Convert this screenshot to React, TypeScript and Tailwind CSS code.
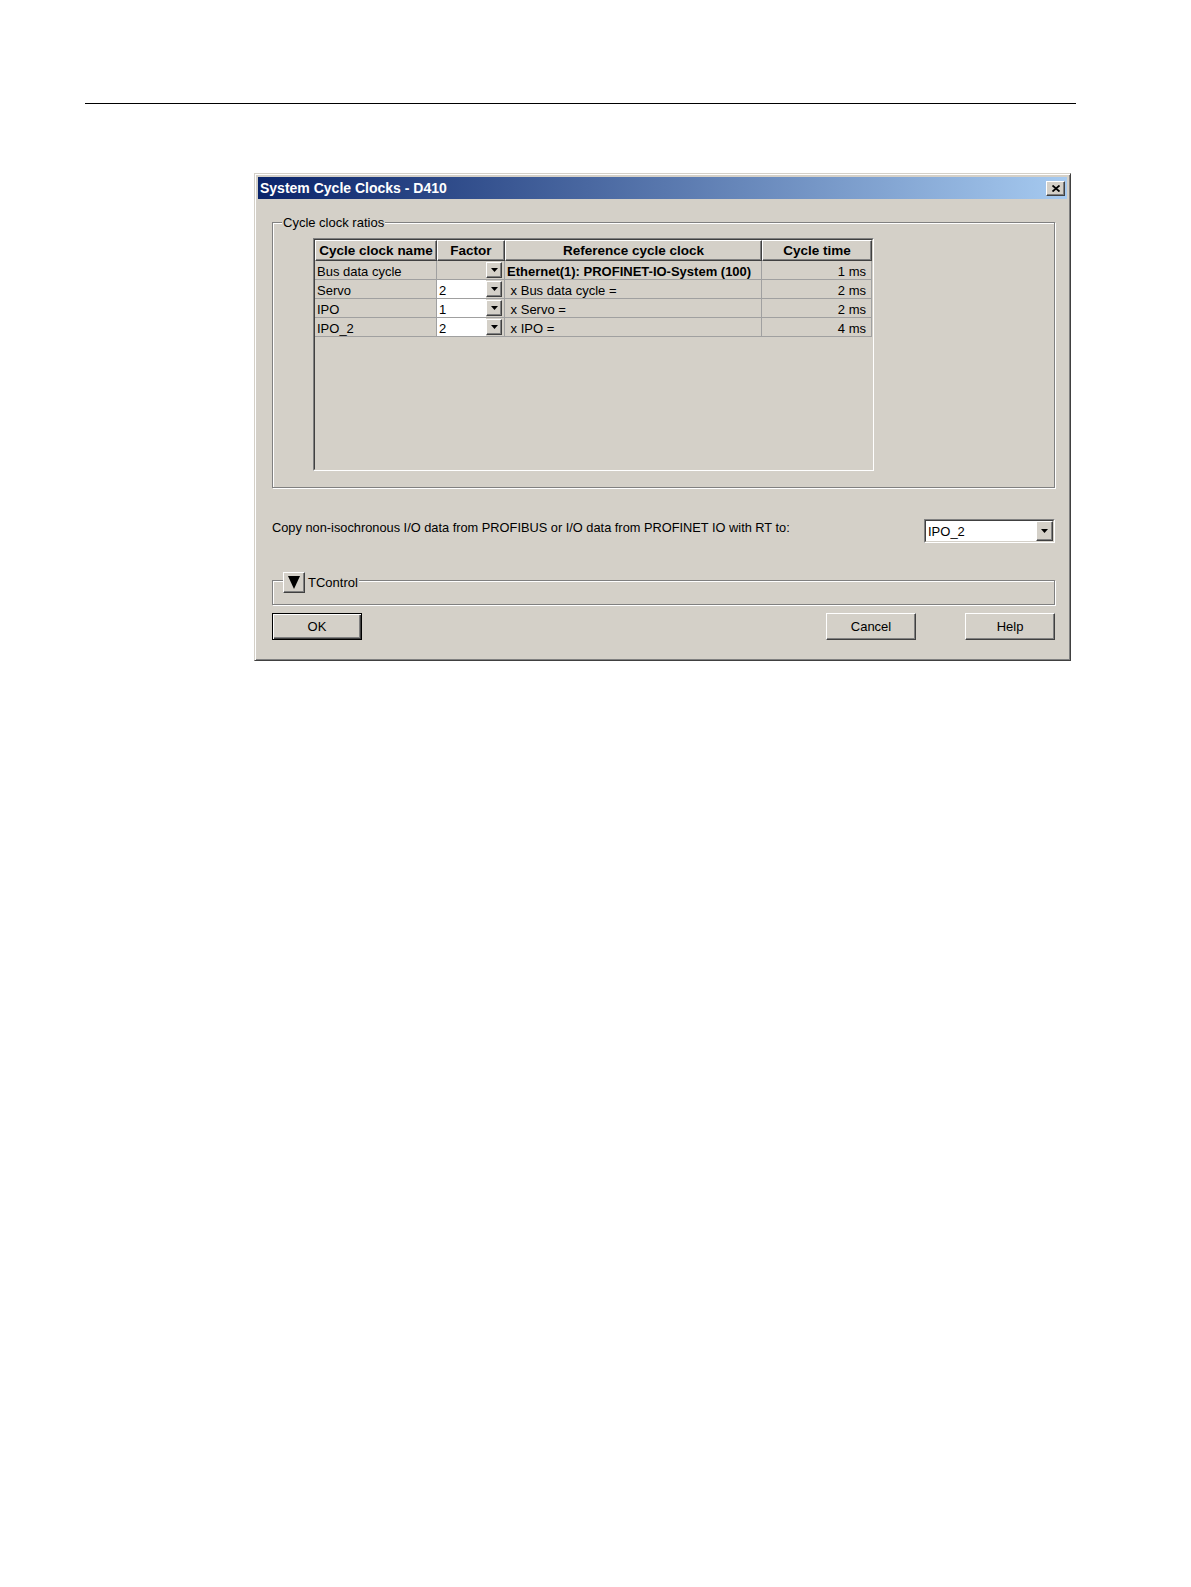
import React from 'react';

interface ClockRow {
  name: string;
  factor: string;
  reference: string;
  time: string;
  bold?: boolean;
  editable: boolean;
}

const rows: ClockRow[] = [
  { name: 'Bus data cycle', factor: '', reference: 'Ethernet(1): PROFINET-IO-System (100)', time: '1 ms', bold: true, editable: false },
  { name: 'Servo', factor: '2', reference: '\u00a0x Bus data cycle =', time: '2 ms', editable: true },
  { name: 'IPO', factor: '1', reference: '\u00a0x Servo =', time: '2 ms', editable: true },
  { name: 'IPO_2', factor: '2', reference: '\u00a0x IPO =', time: '4 ms', editable: true },
];

const raised =
  'border border-t-white border-l-white border-r-[#404040] border-b-[#404040] shadow-[inset_-1px_-1px_0_#808080] bg-[#d4d0c8]';

function DownTriangle() {
  return (
    <svg width="7" height="4" viewBox="0 0 7 4" className="block">
      <path d="M0 0H7L3.5 4Z" fill="#000" />
    </svg>
  );
}

function ArrowButton({ className }: { className: string }) {
  return (
    <div className={`flex shrink-0 items-center justify-center ${raised} ${className}`}>
      <DownTriangle />
    </div>
  );
}

function PushButton({ label, isDefault }: { label: string; isDefault?: boolean }) {
  const frame = isDefault
    ? 'border border-black shadow-[inset_1px_1px_0_#fff,inset_-1px_-1px_0_#404040,inset_-2px_-2px_0_#808080]'
    : raised;
  return (
    <div className={`flex h-[27px] w-[90px] items-center justify-center bg-[#d4d0c8] text-[13px] ${frame}`}>
      {label}
    </div>
  );
}

function HeaderCell({ width, children }: { width: string; children: React.ReactNode }) {
  return (
    <div
      className={`flex h-full items-center justify-center pt-px text-[13.5px] font-bold ${raised} ${width}`}
    >
      {children}
    </div>
  );
}

export default function App() {
  return (
    <div className="min-h-[1587px] bg-white pt-[103px] font-['Liberation_Sans',Arial,sans-serif] text-[13px] text-black">
      <div className="ml-[85px] h-px w-[991px] bg-black" />

      <div className="ml-[254px] mt-[69px] h-[488px] w-[817px] border border-t-[#d4d0c8] border-l-[#d4d0c8] border-r-[#404040] border-b-[#404040] bg-[#d4d0c8] p-[3px] shadow-[inset_1px_1px_0_#fff,inset_-1px_-1px_0_#808080]">
        {/* title bar */}
        <div className="flex h-[22px] items-center justify-between bg-[linear-gradient(to_right,#0a246a,#a6caf0)] pl-[2px] pr-[2px]">
          <span className="text-[14px] font-bold leading-none text-white">System Cycle Clocks - D410</span>
          <div className={`flex h-[15px] w-[19px] items-center justify-center ${raised}`}>
            <svg width="8" height="7" viewBox="0 0 8 7" className="block">
              <path d="M0.5 0.5L7.5 6.5M7.5 0.5L0.5 6.5" stroke="#000" strokeWidth="1.8" />
            </svg>
          </div>
        </div>

        <div className="pl-[14px] pr-[12px]">
          {/* Cycle clock ratios */}
          <div className="mt-[23px] h-[266px] border border-[#808080] shadow-[inset_1px_1px_0_#fff,1px_1px_0_#fff]">
            <div className="-mt-[8px] ml-[9px] w-fit bg-[#d4d0c8] px-[1px] leading-[15px]">Cycle clock ratios</div>

            <div className="ml-[40px] mt-[8px] h-[233px] w-[561px] border border-t-[#808080] border-l-[#808080] border-r-white border-b-white">
              <div className="h-full border border-t-[#404040] border-l-[#404040] border-r-[#d4d0c8] border-b-[#d4d0c8]">
                <div className="flex h-[21px]">
                  <HeaderCell width="w-[122px]">Cycle clock name</HeaderCell>
                  <HeaderCell width="w-[68px]">Factor</HeaderCell>
                  <HeaderCell width="w-[257px]">Reference cycle clock</HeaderCell>
                  <HeaderCell width="w-[110px]">Cycle time</HeaderCell>
                </div>
                {rows.map((row) => (
                  <div key={row.name} className="flex h-[19px] leading-[19px]">
                    <div className="w-[122px] truncate border-r border-b border-[#a0a0a0] pl-[2px] pt-px">{row.name}</div>
                    <div className="flex w-[68px] items-center border-r border-b border-[#a0a0a0]">
                      <div className={`h-full flex-1 pl-[2px] pt-px ${row.editable ? 'bg-white' : ''}`}>{row.factor}</div>
                      <ArrowButton className="mr-[2px] h-[16px] w-[16px]" />
                    </div>
                    <div
                      className={`w-[257px] whitespace-nowrap border-r border-b border-[#a0a0a0] pl-[2px] pt-px ${row.bold ? 'font-bold' : ''}`}
                    >
                      {row.reference}
                    </div>
                    <div className="w-[110px] border-r border-b border-[#a0a0a0] pr-[5px] pt-px text-right">{row.time}</div>
                  </div>
                ))}
              </div>
            </div>
          </div>

          {/* copy target */}
          <div className="mt-[31px] flex h-[24px] items-start justify-between">
            <span className="mt-[1px] text-[12.8px] leading-[15px]">
              Copy non-isochronous I/O data from PROFIBUS or I/O data from PROFINET IO with RT to:
            </span>
            <div className="h-[24px] w-[131px] border border-t-[#808080] border-l-[#808080] border-r-white border-b-white">
              <div className="flex h-full items-center border border-t-[#404040] border-l-[#404040] border-r-[#d4d0c8] border-b-[#d4d0c8] bg-white">
                <span className="flex-1 pl-[2px] leading-[15px]">IPO_2</span>
                <ArrowButton className="h-[20px] w-[17px]" />
              </div>
            </div>
          </div>

          {/* TControl */}
          <div className="mt-[37px] h-[25px] border border-[#808080] shadow-[inset_1px_1px_0_#fff,1px_1px_0_#fff]">
            <div className="-mt-[9px] ml-[10px] flex w-fit items-center bg-[#d4d0c8] pr-[1px]">
              <div className={`flex h-[21px] w-[22px] items-center justify-center ${raised}`}>
                <svg width="12" height="13" viewBox="0 0 12 13" className="block">
                  <path d="M0 0H12L6 13Z" fill="#000" />
                </svg>
              </div>
              <span className="ml-[3px] leading-[15px]">TControl</span>
            </div>
          </div>

          {/* buttons */}
          <div className="mt-[8px] flex">
            <PushButton label="OK" isDefault />
            <div className="ml-auto">
              <PushButton label="Cancel" />
            </div>
            <div className="ml-[49px]">
              <PushButton label="Help" />
            </div>
          </div>
        </div>
      </div>
    </div>
  );
}
